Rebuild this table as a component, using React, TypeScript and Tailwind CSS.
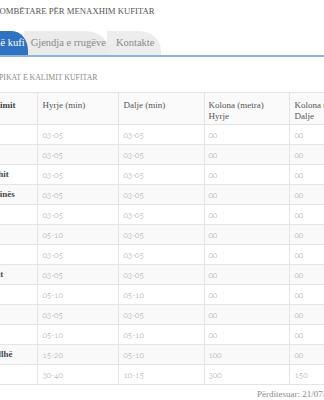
import React from 'react';

const serif = "font-['Liberation_Serif','DejaVu_Serif',serif]";
const num = "font-['Lato','Open_Sans',sans-serif] oldstyle-nums font-light text-[#969696] text-[8px]";

type Row = { name: string; hin: string; dal: string; kh: string; kd: string };

const rows: Row[] = [
  { name: 'Rinas', hin: '03-05', dal: '03-05', kh: '00', kd: '00' },
  { name: 'Durrës', hin: '03-05', dal: '03-05', kh: '00', kd: '00' },
  { name: 'Tushemishit', hin: '03-05', dal: '03-05', kh: '00', kd: '00' },
  { name: 'Qafë Morinës', hin: '03-05', dal: '03-05', kh: '00', kd: '00' },
  { name: 'Morinë', hin: '03-05', dal: '03-05', kh: '00', kd: '00' },
  { name: 'Muriqan', hin: '05-10', dal: '03-05', kh: '00', kd: '00' },
  { name: 'Bllatë', hin: '03-05', dal: '03-05', kh: '00', kd: '00' },
  { name: 'Hani Hotit', hin: '03-05', dal: '03-05', kh: '00', kd: '00' },
  { name: 'Sopik', hin: '05-10', dal: '05-10', kh: '00', kd: '00' },
  { name: 'Vlorë', hin: '03-05', dal: '03-05', kh: '00', kd: '00' },
  { name: 'Sarandë', hin: '05-10', dal: '05-10', kh: '00', kd: '00' },
  { name: 'Qafë e Sallhë', hin: '15-20', dal: '05-10', kh: '100', kd: '00' },
  { name: 'Kakavijë', hin: '30-40', dal: '10-15', kh: '300', kd: '150' },
];

export default function App() {
  return (
    <div className="w-[324px] h-[400px] overflow-hidden bg-white">
      <div className="-ml-[51px] w-[430px]">
        {/* Header */}
        <div className={`${serif} pt-[6px] text-[8.7px] leading-[10px] text-[#555] uppercase`}>
          Agjencia Kombëtare për Menaxhim Kufitar
        </div>

        {/* Tabs */}
        <div className={`${serif} mt-[15px] flex items-end text-[10.5px]`}>
          <div className="relative z-20 h-[24px] pl-[22px] pr-[3px] flex items-center bg-[#2f72c1] text-white rounded-tr-[16px_20px]">
            Pikat në kufi
          </div>
          <div className="relative z-10 -ml-[4px] h-[24px] pl-[7px] pr-[3px] flex items-center bg-[#ebebeb] text-[#8a8a8a] rounded-tr-[24px_20px]">
            Gjendja e rrugëve
          </div>
          <div className="relative z-0 -ml-[2px] h-[24px] pl-[9px] pr-[7px] flex items-center bg-[#ededed] text-[#8a8a8a] rounded-tr-[22px_20px]">
            Kontakte
          </div>
        </div>
        <div className="h-[2px] bg-[#8db5dc]" />

        {/* Section title */}
        <div className={`${serif} mt-[17px] pl-[50px] text-[7.8px] leading-[8px] text-[#8a8a8a] uppercase`}>
          Pikat e kalimit kufitar
        </div>

        {/* Table */}
        <table className="mt-[10px] w-[430px] table-fixed border-collapse">
          <colgroup>
            <col className="w-[88px]" />
            <col className="w-[81px]" />
            <col className="w-[86px]" />
            <col className="w-[85px]" />
            <col className="w-[90px]" />
          </colgroup>
          <thead>
            <tr className={`${serif} h-[32px] bg-[#fafafa] text-[9px] leading-[11px] text-[#555]`}>
              <th className="border-y border-r border-[#e4e4e4] pl-[13px] pt-[7px] align-top text-left font-bold text-[#444] whitespace-nowrap">
                Pika e kalimit
              </th>
              <th className="border border-[#e4e4e4] pl-[5px] pt-[7px] align-top text-left font-normal">
                Hyrje (min)
              </th>
              <th className="border border-[#e4e4e4] pl-[5px] pt-[7px] align-top text-left font-normal">
                Dalje (min)
              </th>
              <th className="border border-[#e4e4e4] pl-[4px] pt-[7px] align-top text-left font-normal">
                Kolona (metra)
                <br />
                Hyrje
              </th>
              <th className="border border-[#e4e4e4] pl-[5px] pt-[7px] align-top text-left font-normal">
                Kolona (metra)
                <br />
                Dalje
              </th>
            </tr>
          </thead>
          <tbody>
            {rows.map((r, i) => (
              <tr key={i} className={`h-[20px] ${i % 2 === 1 ? 'bg-[#f9f9f9]' : 'bg-white'}`}>
                <td className={`${serif} border-y border-r border-[#e4e4e4] pl-[13px] text-[9px] font-bold text-[#4a4a4a] whitespace-nowrap`}>
                  {r.name}
                </td>
                <td className={`${num} border border-[#e4e4e4] pl-[5px]`}>{r.hin}</td>
                <td className={`${num} border border-[#e4e4e4] pl-[5px]`}>{r.dal}</td>
                <td className={`${num} border border-[#e4e4e4] pl-[4px]`}>{r.kh}</td>
                <td className={`${num} border border-[#e4e4e4] pl-[5px]`}>{r.kd}</td>
              </tr>
            ))}
          </tbody>
        </table>

        <div className={`${serif} mt-[3px] pl-[308px] text-[9px] text-[#8a8a8a] whitespace-nowrap`}>
          Përditesuar: 21/07/2019
        </div>
      </div>
    </div>
  );
}
